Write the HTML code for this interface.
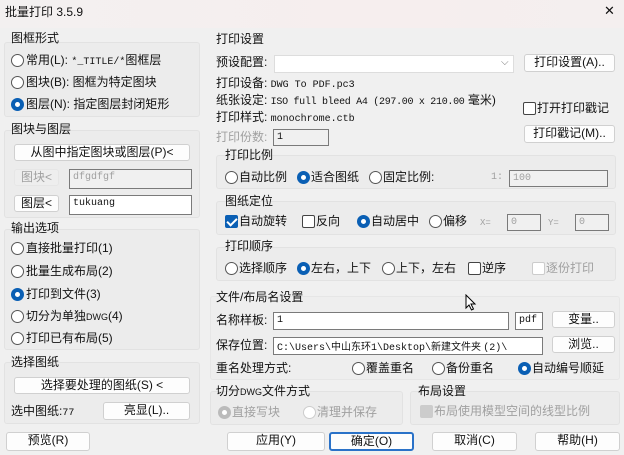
<!DOCTYPE html>
<html><head><meta charset="utf-8"><style>
*{box-sizing:border-box;margin:0;padding:0}
body{width:624px;height:455px;background:#f0f0f0;font-family:"Liberation Sans","Noto Sans CJK SC",sans-serif;font-size:12px;color:#111;position:relative;overflow:hidden}
.a{position:absolute;white-space:nowrap;line-height:14px}
.tb{position:absolute;left:0;top:0;width:624px;height:28px;background:linear-gradient(90deg,#f3f0f0,#f6eeee 60%,#f4efef)}
.g{position:absolute;border:1px solid #e2e2e2;border-radius:3px;background:#ececec}
.btn{position:absolute;background:#fdfdfd;border:1px solid #d0d0d0;border-radius:3px;text-align:center;line-height:15px;font-size:12px}
.in{position:absolute;background:#fff;border:1px solid #7a7a7a;font-family:"Liberation Mono","Noto Sans CJK SC",monospace;font-size:10px;padding-left:3px;line-height:15px}
.dis{color:#a0a0a0}
.r{position:absolute;width:13px;height:13px;border-radius:50%;border:1px solid #555;background:#fff}
.r.on{border:4px solid #0a5fb4;background:#fff}
.c{position:absolute;width:13px;height:13px;border:1px solid #444;border-radius:2px;background:#fff}
.c.on{background:#0a5fb4;border-color:#0a5fb4}
.c.on:after{content:"";position:absolute;left:3px;top:0px;width:4px;height:8px;border:solid #fff;border-width:0 2px 2px 0;transform:rotate(45deg)}
.m{font-family:"Liberation Mono","Noto Sans CJK SC",monospace;font-size:10px}
</style></head><body>
<div class="tb"></div>
<div class="a" style="left:5px;top:5px">批量打印 3.5.9</div>
<div class="a" style="left:604px;top:4px;font-size:13px">✕</div>

<div class="g" style="left:4px;top:42px;width:196px;height:75px"></div>
<div class="a" style="left:11px;top:31px">图框形式</div>
<div class="r" style="left:11px;top:54px"></div><div class="a" style="left:26px;top:53px">常用(L): <span class="m">*_TITLE/*</span>图框层</div>
<div class="r" style="left:11px;top:76px"></div><div class="a" style="left:26px;top:75px">图块(B): 图框为特定图块</div>
<div class="r on" style="left:11px;top:98px"></div><div class="a" style="left:26px;top:97px">图层(N): 指定图层封闭矩形</div>

<div class="g" style="left:4px;top:130px;width:196px;height:88px"></div>
<div class="a" style="left:11px;top:122px">图块与图层</div>
<div class="btn" style="left:14px;top:144px;width:176px;height:17px">从图中指定图块或图层(P)&lt;</div>
<div class="btn dis" style="left:14px;top:169px;width:45px;height:17px;background:#eee;border-color:#e6e6e6">图块&lt;</div>
<div class="in dis" style="left:69px;top:169px;width:123px;height:20px;background:#f0f0f0">dfgdfgf</div>
<div class="btn" style="left:14px;top:195px;width:45px;height:17px">图层&lt;</div>
<div class="in" style="left:69px;top:195px;width:123px;height:20px">tukuang</div>

<div class="g" style="left:4px;top:229px;width:196px;height:121px"></div>
<div class="a" style="left:11px;top:221px">输出选项</div>
<div class="r" style="left:11px;top:242px"></div><div class="a" style="left:26px;top:241px">直接批量打印(1)</div>
<div class="r" style="left:11px;top:265px"></div><div class="a" style="left:26px;top:264px">批量生成布局(2)</div>
<div class="r on" style="left:11px;top:288px"></div><div class="a" style="left:26px;top:287px">打印到文件(3)</div>
<div class="r" style="left:11px;top:310px"></div><div class="a" style="left:26px;top:309px">切分为单独<span style="font-size:9px">DWG</span>(4)</div>
<div class="r" style="left:11px;top:332px"></div><div class="a" style="left:26px;top:331px">打印已有布局(5)</div>

<div class="g" style="left:4px;top:362px;width:196px;height:62px"></div>
<div class="a" style="left:11px;top:355px">选择图纸</div>
<div class="btn" style="left:14px;top:377px;width:176px;height:17px">选择要处理的图纸(S) &lt;</div>
<div class="a" style="left:11px;top:404px">选中图纸:<span class="m">77</span></div>
<div class="btn" style="left:103px;top:402px;width:87px;height:18px">亮显(L)..</div>

<div class="a" style="left:216px;top:32px">打印设置</div>
<div class="a" style="left:216px;top:55px">预设配置:</div>
<div class="in" style="left:274px;top:55px;width:240px;height:18px;border-color:#ddd"></div>
<div class="a" style="left:501px;top:56px;color:#777;font-size:10px">⌵</div>
<div class="btn" style="left:524px;top:54px;width:91px;height:18px">打印设置(A)..</div>
<div class="a" style="left:216px;top:76px">打印设备: <span class="m">DWG To PDF.pc3</span></div>
<div class="a" style="left:216px;top:93px">纸张设定: <span class="m" style="letter-spacing:-0.3px">ISO full bleed A4 (297.00 x 210.00</span> 毫米)</div>
<div class="a" style="left:216px;top:110px">打印样式: <span class="m">monochrome.ctb</span></div>
<div class="c" style="left:523px;top:102px"></div><div class="a" style="left:537px;top:101px">打开打印戳记</div>
<div class="btn" style="left:524px;top:125px;width:91px;height:18px">打印戳记(M)..</div>
<div class="a dis" style="left:216px;top:130px">打印份数:</div>
<div class="in" style="left:273px;top:129px;width:56px;height:17px;background:#f0f0f0">1</div>

<div class="g" style="left:216px;top:155px;width:400px;height:34px"></div>
<div class="a" style="left:225px;top:148px">打印比例</div>
<div class="r" style="left:225px;top:171px"></div><div class="a" style="left:239px;top:170px">自动比例</div>
<div class="r on" style="left:297px;top:171px"></div><div class="a" style="left:311px;top:170px">适合图纸</div>
<div class="r" style="left:369px;top:171px"></div><div class="a" style="left:383px;top:170px">固定比例:</div>
<div class="a dis m" style="left:491px;top:171px">1:</div>
<div class="in dis" style="left:509px;top:170px;width:99px;height:17px;background:#f0f0f0">100</div>

<div class="g" style="left:216px;top:201px;width:400px;height:34px"></div>
<div class="a" style="left:225px;top:194px">图纸定位</div>
<div class="c on" style="left:225px;top:215px"></div><div class="a" style="left:239px;top:214px">自动旋转</div>
<div class="c" style="left:302px;top:215px"></div><div class="a" style="left:316px;top:214px">反向</div>
<div class="r on" style="left:357px;top:215px"></div><div class="a" style="left:371px;top:214px">自动居中</div>
<div class="r" style="left:429px;top:215px"></div><div class="a" style="left:443px;top:214px">偏移</div>
<div class="a dis m" style="left:480px;top:216px;font-size:9px">X=</div>
<div class="in dis" style="left:507px;top:214px;width:34px;height:17px;background:#f0f0f0">0</div>
<div class="a dis m" style="left:548px;top:216px;font-size:9px">Y=</div>
<div class="in dis" style="left:575px;top:214px;width:34px;height:17px;background:#f0f0f0">0</div>

<div class="g" style="left:216px;top:247px;width:400px;height:34px"></div>
<div class="a" style="left:225px;top:239px">打印顺序</div>
<div class="r" style="left:225px;top:262px"></div><div class="a" style="left:239px;top:261px">选择顺序</div>
<div class="r on" style="left:297px;top:262px"></div><div class="a" style="left:311px;top:261px">左右，上下</div>
<div class="r" style="left:382px;top:262px"></div><div class="a" style="left:396px;top:261px">上下，左右</div>
<div class="c" style="left:468px;top:262px"></div><div class="a" style="left:482px;top:261px">逆序</div>
<div class="c" style="left:532px;top:262px;border-color:#ccc"></div><div class="a dis" style="left:546px;top:261px">逐份打印</div>

<div class="g" style="left:210px;top:296px;width:410px;height:84px;border-color:#e6e6e6;background:#eeeeee"></div>
<div class="a" style="left:216px;top:290px">文件/布局名设置</div>
<div class="a" style="left:216px;top:313px">名称样板:</div>
<div class="in" style="left:273px;top:312px;width:236px;height:18px">1</div>
<div class="in" style="left:515px;top:312px;width:28px;height:18px">pdf</div>
<div class="btn" style="left:552px;top:311px;width:63px;height:17px">变量..</div>
<div class="a" style="left:216px;top:338px">保存位置:</div>
<div class="in" style="left:273px;top:337px;width:270px;height:18px">C:\Users\<span style="font-family:'Noto Sans CJK SC'">中山东环</span>1\Desktop\<span style="font-family:'Noto Sans CJK SC'">新建文件夹 </span>(2)\</div>
<div class="btn" style="left:552px;top:336px;width:63px;height:17px">浏览..</div>
<div class="a" style="left:216px;top:361px">重名处理方式:</div>
<div class="r" style="left:352px;top:362px"></div><div class="a" style="left:366px;top:361px">覆盖重名</div>
<div class="r" style="left:432px;top:362px"></div><div class="a" style="left:446px;top:361px">备份重名</div>
<div class="r on" style="left:518px;top:362px"></div><div class="a" style="left:532px;top:361px">自动编号顺延</div>

<div class="g" style="left:210px;top:391px;width:193px;height:34px"></div>
<div class="a" style="left:216px;top:384px">切分<span style="font-size:9px">DWG</span>文件方式</div>
<div class="r" style="left:218px;top:406px;border-color:#bbb;border-width:4px"></div><div class="a dis" style="left:232px;top:405px">直接写块</div>
<div class="r" style="left:303px;top:406px;border-color:#ccc"></div><div class="a dis" style="left:317px;top:405px">清理并保存</div>
<div class="g" style="left:410px;top:391px;width:210px;height:34px"></div>
<div class="a" style="left:418px;top:384px">布局设置</div>
<div class="c" style="left:420px;top:405px;background:#ccc;border-color:#ccc"></div><div class="a dis" style="left:434px;top:404px">布局使用模型空间的线型比例</div>

<svg class="a" style="left:465px;top:294px" width="12" height="18" viewBox="0 0 12 18"><path d="M1 1 L1 14 L4 11 L6.5 16 L8.5 15 L6 10 L10 10 Z" fill="#fff" stroke="#000" stroke-width="1"/></svg>

<div class="btn" style="left:6px;top:432px;width:84px;height:19px">预览(R)</div>
<div class="btn" style="left:227px;top:432px;width:98px;height:19px">应用(Y)</div>
<div class="btn" style="left:329px;top:432px;width:85px;height:19px;border:2px solid #2a72c8">确定(O)</div>
<div class="btn" style="left:432px;top:432px;width:85px;height:19px">取消(C)</div>
<div class="btn" style="left:535px;top:432px;width:85px;height:19px">帮助(H)</div>
</body></html>
